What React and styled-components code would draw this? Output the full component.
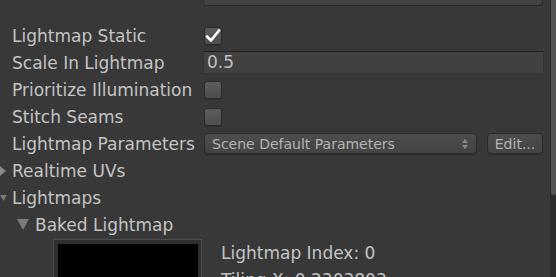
import React from 'react';
import styled, { createGlobalStyle } from 'styled-components';

const GlobalStyle = createGlobalStyle`
  html, body {
    margin: 0;
    padding: 0;
    background: #383838;
    overflow: hidden;
  }
`;

const Window = styled.div`
  width: 556px;
  height: 277px;
  display: flex;
  background: #383838;
  font-family: 'DejaVu Sans', 'Liberation Sans', sans-serif;
  color: #c4c4c4;
  overflow: hidden;
`;

const Content = styled.div`
  flex: 1;
  display: flex;
  flex-direction: column;
  padding-right: 6px;
  & > * {
    flex-shrink: 0;
  }
`;

const Scrollbar = styled.div`
  width: 5px;
  background: #2c2c2c;
  display: flex;
  flex-direction: column;
  padding-left: 1px;
`;

const Thumb = styled.div`
  height: 195px;
  background: #555;
  border-radius: 0 0 3px 3px;
`;

const TopStrip = styled.div`
  height: 6px;
  display: flex;
  align-items: flex-end;
  padding-left: 203px;
  overflow: hidden;
  margin-bottom: 16px;
`;

const TopDropdown = styled.div`
  width: 338px;
  height: 20px;
  flex-shrink: 0;
  border: 1px solid #2a2a2a;
  border-radius: 4px;
  background: #434343;
  box-shadow: 0 1px 0 #303030;
`;

const Row = styled.div`
  height: 27px;
  display: flex;
  align-items: center;
  padding-left: 12px;
`;

const Label = styled.div`
  width: 192px;
  flex-shrink: 0;
  font-size: 17px;
  white-space: nowrap;
`;

const Checkbox = styled.div`
  width: 16px;
  height: 16px;
  border: 1px solid #2b2b2b;
  border-radius: 3px;
  background: linear-gradient(#5c5c5c, #4e4e4e);
  box-shadow: 0 1px 0 #2e2e2e;
  display: flex;
  align-items: center;
  justify-content: center;
  margin-top: 1px;
`;

const TextField = styled.div`
  flex: 1;
  height: 21px;
  margin-left: -1px;
  margin-top: -1px;
  background: #414141;
  border: 1px solid #333;
  border-top-color: #202020;
  display: flex;
  align-items: center;
  padding-left: 3px;
  font-size: 17px;
  color: #c0c0c0;
`;

const Popup = styled.div`
  width: 273px;
  height: 21px;
  border: 1px solid #2a2a2a;
  border-radius: 4px;
  background: linear-gradient(#4d4d4d, #434343);
  box-shadow: 0 1px 0 #2d2d2d;
  display: flex;
  align-items: center;
  justify-content: space-between;
  padding: 0 8px 0 7px;
  box-sizing: border-box;
  font-size: 14px;
  color: #b4b4b4;
`;

const Button = styled.div`
  margin-left: 10px;
  width: 56px;
  height: 21px;
  box-sizing: border-box;
  border: 1px solid #2a2a2a;
  border-radius: 4px;
  background: linear-gradient(#4d4d4d, #434343);
  box-shadow: 0 1px 0 #2d2d2d;
  display: flex;
  align-items: center;
  justify-content: center;
  font-size: 14px;
  color: #b4b4b4;
`;

const Foldout = styled.div`
  display: flex;
  align-items: center;
  height: 27px;
  padding-left: ${({ $indent }) => $indent || 0}px;
  font-size: 17px;
  white-space: nowrap;
`;

const Arrow = styled.svg`
  flex-shrink: 0;
  margin-right: ${({ $gap }) => $gap}px;
`;

const Preview = styled.div`
  display: flex;
  padding-left: 53px;
  margin-top: 1px;
`;

const Frame = styled.div`
  width: 149px;
  height: 60px;
  box-sizing: border-box;
  border: 1px solid #4e4e4e;
  background: #2f2f2f;
  padding: 4px 3px 0 4px;
  flex-shrink: 0;
`;

const Black = styled.div`
  width: 100%;
  height: 100%;
  background: #000;
`;

const Info = styled.div`
  margin-left: 19px;
  display: flex;
  flex-direction: column;
`;

const InfoLine = styled.div`
  height: 27px;
  display: flex;
  align-items: center;
  font-size: 17px;
  white-space: nowrap;
`;

const Check = () => (
  <svg width="16" height="14" viewBox="0 0 16 14">
    <path d="M2 7.5 L6 11.5 L14 1.5" fill="none" stroke="#fff" strokeWidth="2.6" strokeLinecap="round" strokeLinejoin="round" />
  </svg>
);

const Stepper = () => (
  <svg width="6" height="10" viewBox="0 0 6 10">
    <path d="M3 0 L6 4 L0 4 Z" fill="#8a8a8a" />
    <path d="M3 10 L6 6 L0 6 Z" fill="#8a8a8a" />
  </svg>
);

const RightArrow = () => (
  <Arrow width="6" height="10" viewBox="0 0 6 10" $gap={6}>
    <path d="M0 0 L6 5 L0 10 Z" fill="#8a8a8a" />
  </Arrow>
);

const DownArrow = ({ size = 7, gap = 5 }) => (
  <Arrow width={size} height={size - 1} viewBox="0 0 10 9" $gap={gap}>
    <path d="M0 0 L10 0 L5 9 Z" fill="#7c7c7c" />
  </Arrow>
);

const App = () => {
  return (
    <Window>
      <GlobalStyle />
      <Content>
        <TopStrip>
          <TopDropdown />
        </TopStrip>
        <Row>
          <Label>Lightmap Static</Label>
          <Checkbox>
            <Check />
          </Checkbox>
        </Row>
        <Row>
          <Label>Scale In Lightmap</Label>
          <TextField>0.5</TextField>
        </Row>
        <Row>
          <Label>Prioritize Illumination</Label>
          <Checkbox />
        </Row>
        <Row>
          <Label>Stitch Seams</Label>
          <Checkbox />
        </Row>
        <Row>
          <Label>Lightmap Parameters</Label>
          <Popup>
            <span>Scene Default Parameters</span>
            <Stepper />
          </Popup>
          <Button>Edit...</Button>
        </Row>
        <Foldout>
          <RightArrow />
          Realtime UVs
        </Foldout>
        <Foldout>
          <DownArrow size={7} gap={5} />
          Lightmaps
        </Foldout>
        <Foldout $indent={17}>
          <DownArrow size={12} gap={6} />
          Baked Lightmap
        </Foldout>
        <Preview>
          <Frame>
            <Black />
          </Frame>
          <Info>
            <InfoLine>Lightmap Index: 0</InfoLine>
            <InfoLine>Tiling X: 0.2303803</InfoLine>
          </Info>
        </Preview>
      </Content>
      <Scrollbar>
        <Thumb />
      </Scrollbar>
    </Window>
  );
};

export default App;
